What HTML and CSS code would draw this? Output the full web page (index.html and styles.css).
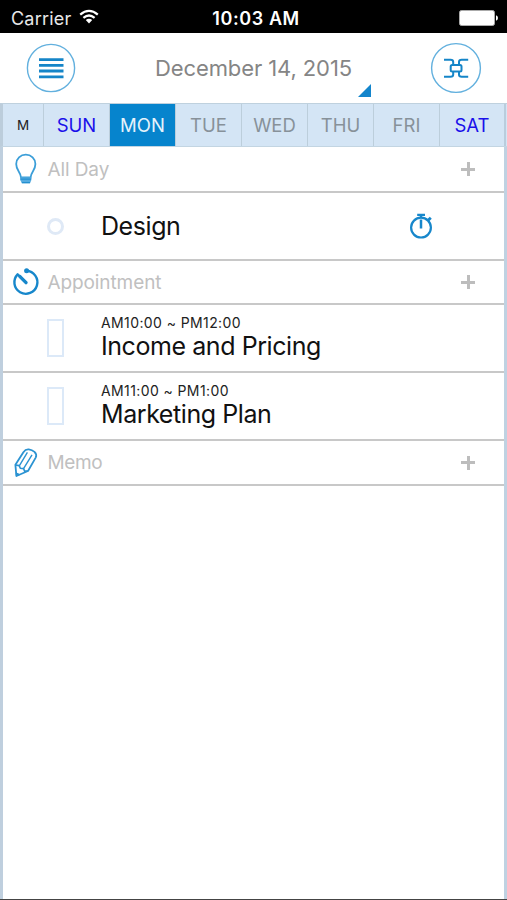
FILE: index.html
```
<!DOCTYPE html>
<html lang="en">
<head>
    <meta charset="UTF-8">
    <meta name="viewport" content="width=device-width, initial-scale=1.0">
    <title>Planner</title>
    <link rel="stylesheet" href="styles.css">
</head>
<body>
    <div class="phone">
        <!-- status bar -->
        <div class="status">
            <div class="carrier">
                <span>Carrier</span>
                <svg class="wifi" width="20" height="16" viewBox="0 0 20 16">
                    <path d="M1.2 5.6Q10 -1.8 18.8 5.6M4.4 8.8Q10 4.3 15.6 8.8" fill="none" stroke="#fff" stroke-width="2.3"/>
                    <path d="M6.8 11Q10 8.6 13.2 11L10 14.6Z" fill="#fff"/>
                </svg>
            </div>
            <div class="clock">10:03 AM</div>
            <svg class="battery" width="39" height="16" viewBox="0 0 39 16">
                <rect x="0.5" y="0.5" width="35" height="15" rx="2" fill="#fff" stroke="#aaa"/>
                <path d="M37 5.3Q39 6 39 8T37 10.7Z" fill="#fff"/>
            </svg>
        </div>
        <!-- header -->
        <div class="header">
            <a href="javascript:;" class="round menu">
                <svg width="50" height="50" viewBox="0 0 50 50" fill="none">
                    <circle cx="25" cy="25" r="23.6" stroke="#62b0de" stroke-width="1.4"/>
                    <path d="M13 16.6H37.5M13 22.3H37.5M13 28H37.5M13 33.8H37.5" stroke="#1585c8" stroke-width="2.8"/>
                </svg>
            </a>
            <div class="date">December 14, 2015</div>
            <a href="javascript:;" class="round link">
                <svg width="52" height="52" viewBox="0 0 52 52" fill="none">
                    <circle cx="26" cy="26" r="24.4" stroke="#62b0de" stroke-width="1.4"/>
                    <g stroke="#1585c8" stroke-width="2">
                        <rect x="20.7" y="23" width="10.8" height="6.4" rx="1.5"/>
                        <path d="M14 17.7H20.5Q23.2 17.7 23.2 20V23M38.2 17.7H31.7Q29 17.7 29 20V23M14 34.8H20.5Q23.2 34.8 23.2 32.5V29.5M38.2 34.8H31.7Q29 34.8 29 32.5V29.5"/>
                    </g>
                </svg>
            </a>
            <div class="corner"></div>
        </div>
        <!-- days of the week -->
        <div class="week">
            <div class="day month"><span>M</span></div>
            <div class="day holiday"><span>SUN</span></div>
            <div class="day active"><span>MON</span></div>
            <div class="day"><span>TUE</span></div>
            <div class="day"><span>WED</span></div>
            <div class="day"><span>THU</span></div>
            <div class="day"><span>FRI</span></div>
            <div class="day holiday"><span>SAT</span></div>
        </div>
        <div class="list">
            <div class="title allday">
                <svg class="icon" width="30" height="32" viewBox="0 0 30 32" fill="none">
                    <path d="M11 24.5C10.5 18.5 6.2 17.5 6.2 11A9.6 9.3 0 0 1 25.4 11C25.4 17.5 21 18.5 20.6 24.5Z" stroke="#3b9ed8" stroke-width="1.8"/>
                    <path d="M10.2 24.5H21.4V27L20 30.3H12L10.2 27Z" fill="#55abe0"/>
                    <path d="M10.5 26.2H21M11.8 29.7H20" stroke="#2490d0" stroke-width="1.2"/>
                </svg>
                <span class="label">All Day</span>
                <a href="javascript:;" class="plus"></a>
            </div>
            <div class="item">
                <div class="mark"><i class="dot"></i></div>
                <div class="text"><div class="name">Design</div></div>
                <svg class="stopwatch" width="26" height="28" viewBox="0 0 26 28" fill="none" stroke="#1787cb">
                    <circle cx="13" cy="15.6" r="9.9" stroke-width="2.2"/>
                    <path d="M9.2 2.9H17M13 3V6" stroke-width="2.4"/>
                    <path d="M13 7.5V16.5" stroke-width="2.5"/>
                    <path d="M20 8.4L22.8 5.8" stroke-width="2.8"/>
                </svg>
            </div>
            <div class="title appoint">
                <svg class="icon" width="30" height="32" viewBox="0 0 30 32" fill="none" stroke="#1787cb">
                    <path d="M16.5 4.8A11.5 11.5 0 1 1 7.6 8.3L16 16.4" stroke-width="2.4" stroke-linejoin="round"/>
                    <path d="M10 10.6L16 16.6" stroke-width="3.4" stroke-linecap="round"/>
                    <circle cx="16.6" cy="4.8" r="2.5" fill="#1787cb" stroke="none"/>
                </svg>
                <span class="label">Appointment</span>
                <a href="javascript:;" class="plus"></a>
            </div>
            <div class="item">
                <div class="mark"><i class="bar"></i></div>
                <div class="text">
                    <div class="time">AM10:00 ~ PM12:00</div>
                    <div class="name">Income and Pricing</div>
                </div>
            </div>
            <div class="item">
                <div class="mark"><i class="bar"></i></div>
                <div class="text">
                    <div class="time">AM11:00 ~ PM1:00</div>
                    <div class="name">Marketing Plan</div>
                </div>
            </div>
            <div class="title memo">
                <svg class="icon" width="30" height="32" viewBox="0 0 30 32" fill="none" stroke="#2b93d2" stroke-linejoin="round">
                    <path d="M5.4 17.8L13.4 5.2Q15.6 2 18.8 2.4Q22 2.8 24.5 4.9Q27.2 7.6 25.7 10.6L18 24L6.4 29Z" stroke-width="1.8"/>
                    <path d="M5.4 18L9.2 18.6L10.3 21.3L13.6 21.6L14.6 24.1L18 24" stroke-width="1.6"/>
                    <path d="M9.6 18.3L17.4 5.4M13.7 21.3L22 7.8" stroke-width="1.4"/>
                    <path d="M6.2 25.8L9.8 27.6L6.4 29Z" fill="#2b93d2"/>
                </svg>
                <span class="label">Memo</span>
                <a href="javascript:;" class="plus"></a>
            </div>
        </div>
    </div>
</body>
</html>
```
FILE: styles.css
```
*{
    box-sizing: border-box;
}
body{
    margin: 0;
    font-family: Inter, "Liberation Sans", sans-serif;
}
a{
    text-decoration: none;
}
svg{
    display: block;
}
.phone{
    width: 507px;
    height: 900px;
    display: flex;
    flex-direction: column;
    background-color: #fff;
    border-bottom: 1px solid #444;
    white-space: nowrap;
    overflow: hidden;
}
/* status bar */
.status{
    height: 33px;
    padding: 3px 9px 0 11px;
    display: grid;
    grid-template-columns: 1fr auto 1fr;
    align-items: center;
    background-color: #000;
    color: #fff;
    font-size: 18px;
}
.carrier{
    display: flex;
    align-items: center;
    gap: 8px;
    color: #e8e8e8;
    letter-spacing: 0.2px;
}
.wifi{
    margin-top: -3px;
}
.clock{
    padding-left: 3px;
    font-weight: 600;
    font-size: 18px;
    letter-spacing: 0.6px;
}
.battery{
    justify-self: end;
}
/* header */
.header{
    height: 70px;
    padding: 0 25px 0 26px;
    display: flex;
    align-items: center;
    justify-content: space-between;
    position: relative;
}
.date{
    padding-left: 1px;
    color: #858585;
    font-size: 22px;
    letter-spacing: -0.1px;
}
.corner{
    width: 13px;
    height: 13px;
    position: absolute;
    right: 136px;
    bottom: 6px;
    background-color: #1385cc;
    clip-path: polygon(100% 0, 100% 100%, 0 100%);
}
/* week */
.week{
    height: 44px;
    display: grid;
    grid-template-columns: 41px repeat(7, 66px);
    background-color: #d4e5f5;
    border-top: 1px solid #bfd1de;
    border-bottom: 1px solid #c3d5e2;
    border-left: 3px solid #bccddb;
}
.day{
    display: flex;
    align-items: center;
    justify-content: center;
    border-right: 1px solid #bccedb;
    color: #879199;
    font-size: 18.5px;
}
.day:last-child{
    border-right: 2px solid #b9cddd;
}
.month{
    color: #222;
    font-size: 13.5px;
}
.holiday{
    color: #1a10ea;
}
.active{
    background-color: #0684cd;
    color: #e6f3fb;
}
/* list */
.list{
    flex: 1;
    border-left: 3px solid #bfcfde;
    border-right: 3px solid #bfd2e2;
}
.title{
    height: 45px;
    padding: 0 29px 0 7px;
    display: flex;
    align-items: center;
    border-bottom: 2px solid #c8c8c8;
    color: #c0c0c0;
    font-size: 19px;
    letter-spacing: -0.1px;
}
.allday{
    height: 46px;
}
.appoint{
    height: 44px;
}
.memo{
    letter-spacing: -0.4px;
}
.label{
    margin-left: 7.5px;
    flex: 1;
}
.plus{
    width: 14px;
    height: 14px;
    background:
        linear-gradient(#bdbdbd, #bdbdbd) center / 14px 3px no-repeat,
        linear-gradient(#bdbdbd, #bdbdbd) center / 3px 14px no-repeat;
}
.item{
    height: 68px;
    padding-right: 70.5px;
    display: flex;
    align-items: center;
    border-bottom: 2px solid #c8c8c8;
}
.mark{
    width: 98px;
    padding-left: 44px;
}
.dot{
    width: 17px;
    height: 17px;
    display: block;
    border: 3px solid #dfe9f6;
    border-radius: 50%;
}
.bar{
    width: 17px;
    height: 38px;
    display: block;
    border: 2px solid #dce9f8;
}
.text{
    flex: 1;
    padding-bottom: 1px;
}
.time{
    color: #222;
    font-size: 14px;
    line-height: 17px;
    letter-spacing: 0.4px;
}
.name{
    color: #111;
    font-size: 25px;
    line-height: 30px;
    letter-spacing: -0.43px;
}
```
